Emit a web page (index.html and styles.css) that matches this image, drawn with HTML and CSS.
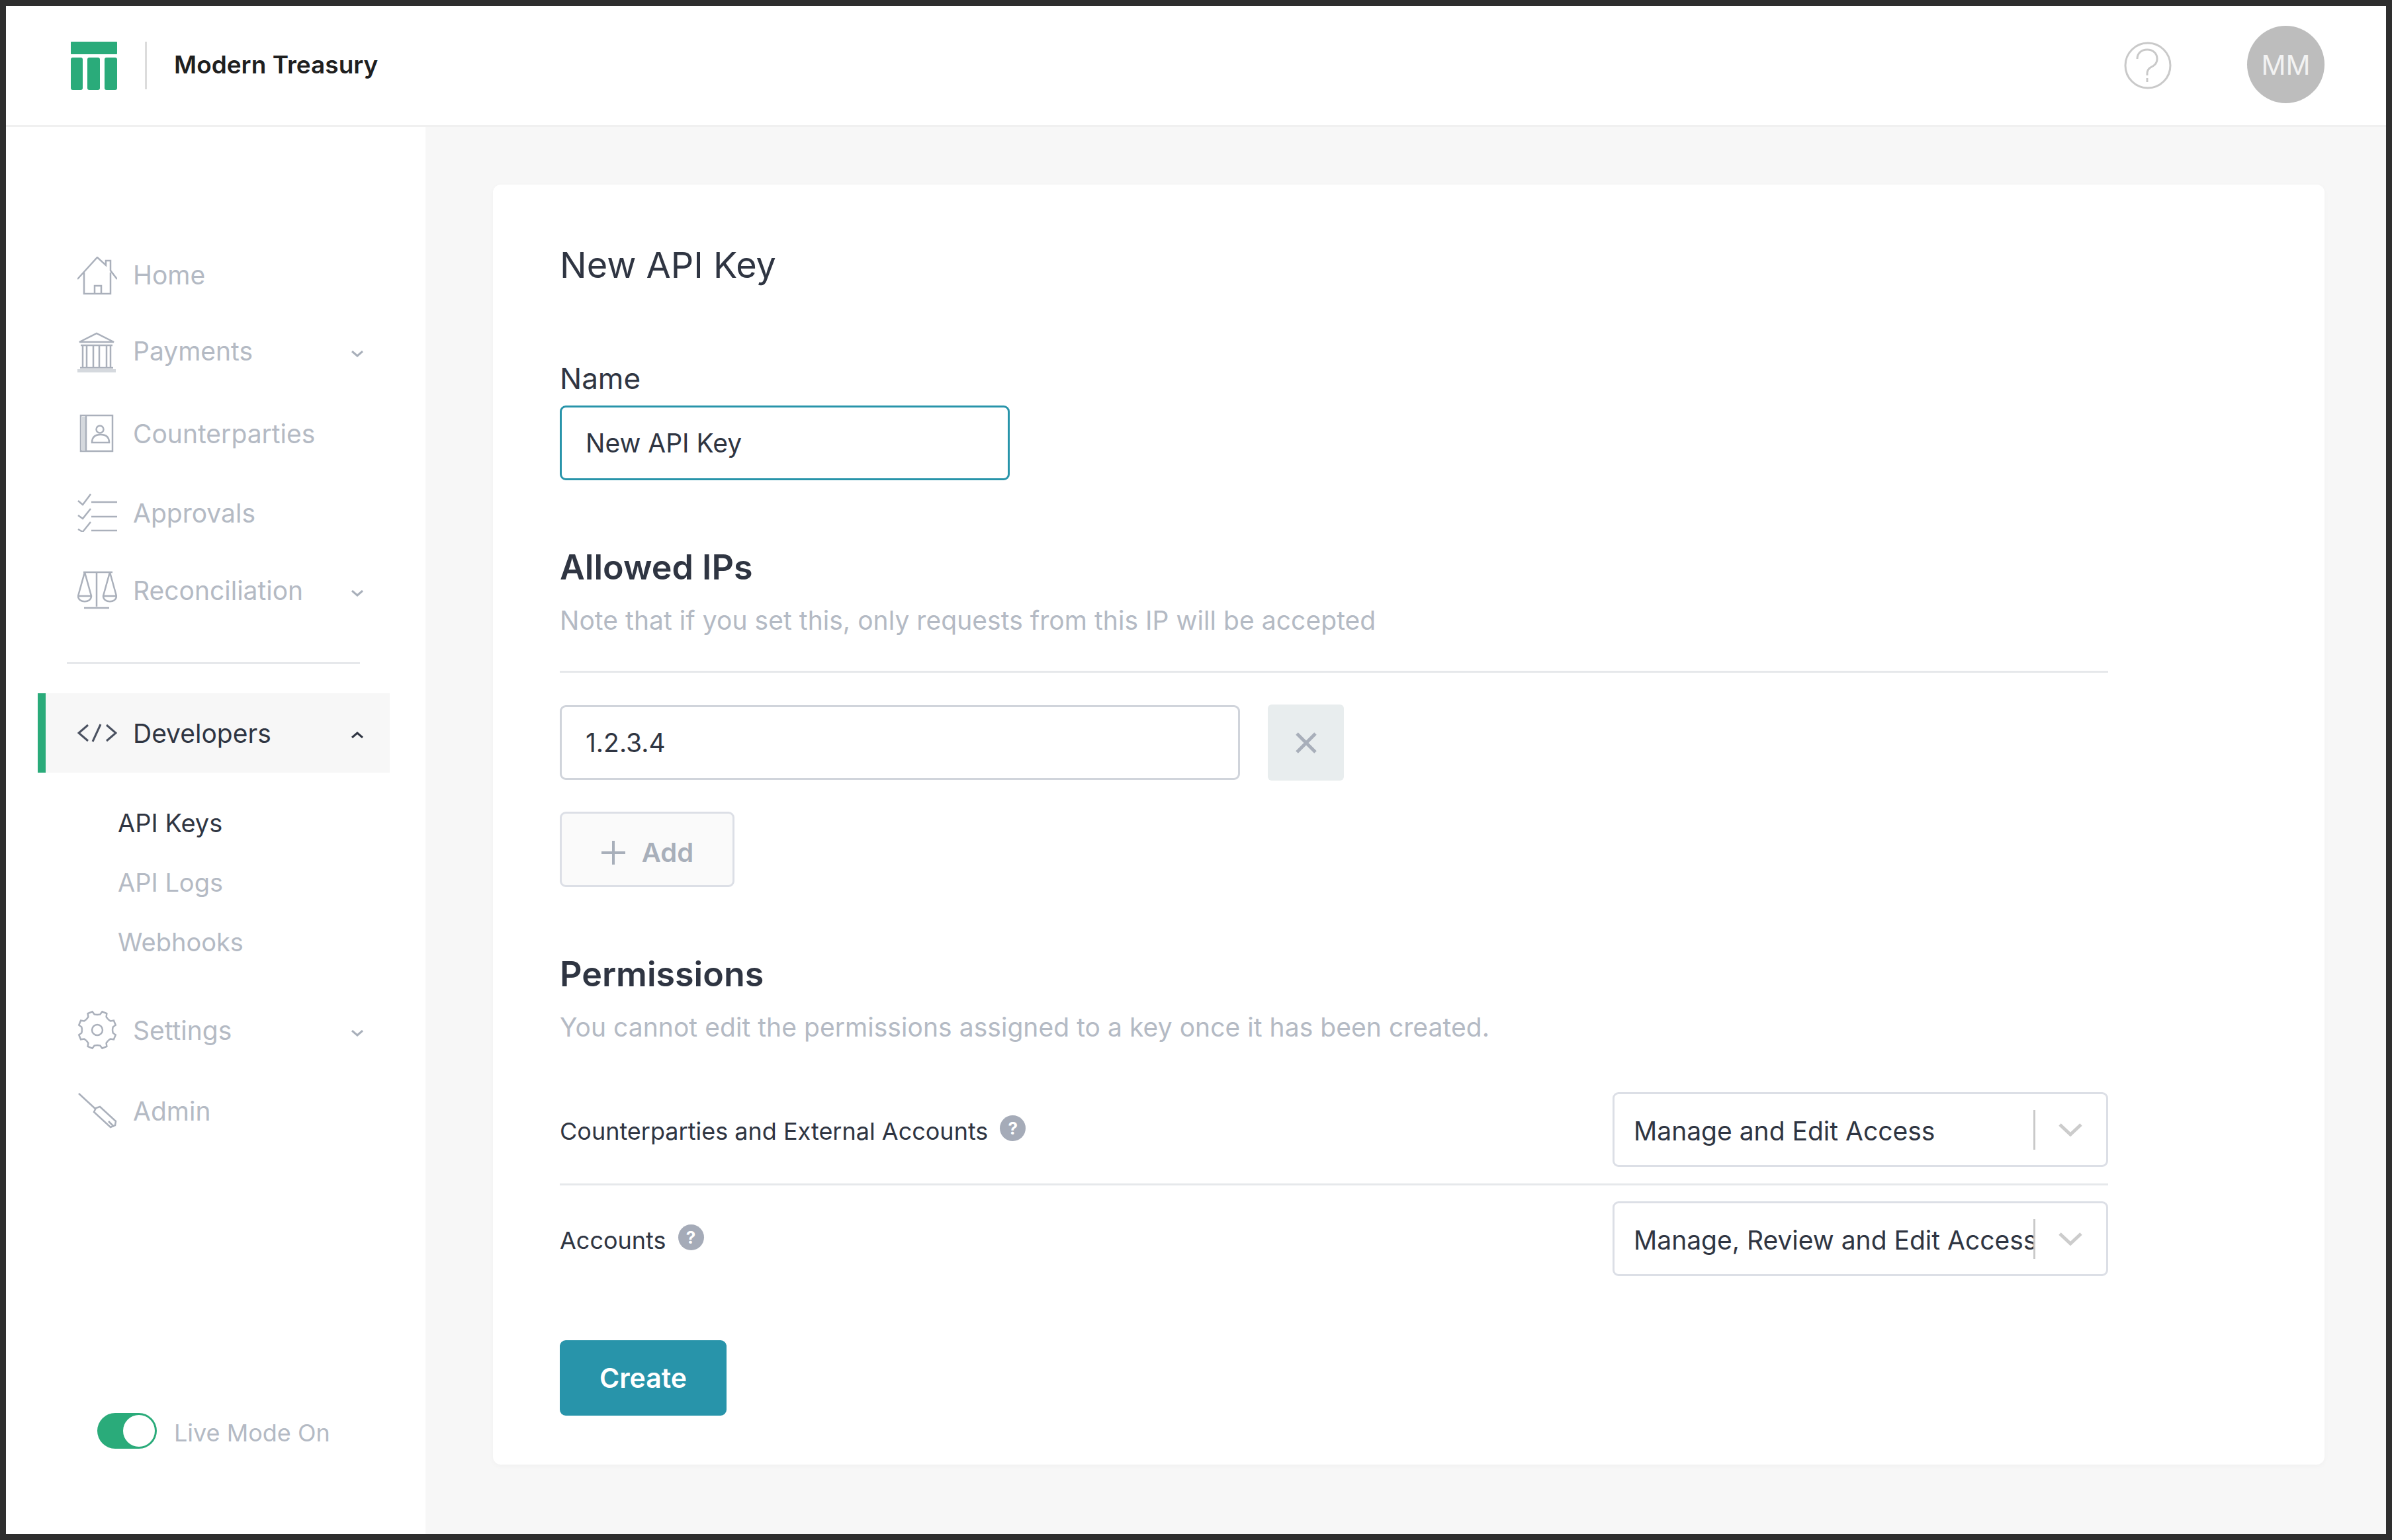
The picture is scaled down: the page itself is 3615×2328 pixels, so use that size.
FILE: index.html
```html
<!DOCTYPE html>
<html lang="en">
<head>
    <meta charset="UTF-8">
    <title>New API Key</title>
    <link rel="stylesheet" href="styles.css">
</head>
<body>
    <div class="frame">
        <header class="topbar">
            <div class="brand">
                <svg class="logo" width="70" height="73" viewBox="0 0 70 73">
                    <rect x="0" y="0" width="70" height="19" rx="1" fill="#2aab7a"/>
                    <rect x="0" y="24" width="18" height="49" rx="3" fill="#2aab7a"/>
                    <rect x="25" y="24" width="19" height="49" rx="3" fill="#2aab7a"/>
                    <rect x="51" y="24" width="19" height="49" rx="3" fill="#2aab7a"/>
                </svg>
                <span class="brand-divider"></span>
                <span class="brand-name">Modern Treasury</span>
            </div>
            <div class="topbar-right">
                <svg class="help" width="72" height="72" viewBox="0 0 72 72" fill="none" stroke="#c9c9c9" stroke-width="3">
                    <circle cx="36" cy="36" r="34"/>
                    <path d="M20 26c0-9 7-14 15-14s15 5 15 14c0 8-6 11-10 13-3 2-5 4-5 9v3"/>
                    <path d="M35 55v6"/>
                </svg>
                <div class="avatar">MM</div>
            </div>
        </header>

        <div class="layout">
            <nav class="sidebar">
                <a class="nav-item nav-home">
                    <svg class="nav-icon" width="60" height="58" viewBox="0 0 60 58">
                        <path d="M0 34 30 1l13 12V6h7v15l10 13M10 24v32h40V24M26 56V44h10v12"/>
                    </svg>
                    <span>Home</span>
                </a>
                <a class="nav-item nav-payments">
                    <svg class="nav-icon" width="60" height="62" viewBox="0 0 60 62">
                        <path d="M3 15 29 2l26 13zM5 20h48M8 20v33M14 20v33M24 20v33M33 20v33M44 20v33M50 20v33M4 54h50"/>
                        <rect class="fill" x="0" y="56" width="58" height="5"/>
                    </svg>
                    <span>Payments</span>
                    <svg class="chevron" width="18" height="10" viewBox="0 0 18 10"><path d="M1 1l8 7 8-7"/></svg>
                </a>
                <a class="nav-item nav-counter">
                    <svg class="nav-icon" width="60" height="58" viewBox="0 0 60 58">
                        <rect x="5" y="2" width="48" height="54"/>
                        <rect class="fill" x="7" y="4" width="5" height="50"/>
                        <path d="M13 2v54M22 43c0-9 6-12 13-12s13 3 13 12z"/>
                        <circle cx="34" cy="23" r="5.500"/>
                    </svg>
                    <span>Counterparties</span>
                </a>
                <a class="nav-item nav-approvals">
                    <svg class="nav-icon" width="60" height="58" viewBox="0 0 60 58">
                        <path d="M1 11l7 6L20 1M1 33l7 5 12-15M1 54l7 4 12-15M21 13h39M21 35h39M21 56h39"/>
                    </svg>
                    <span>Approvals</span>
                </a>
                <a class="nav-item nav-recon">
                    <svg class="nav-icon" width="60" height="58" viewBox="0 0 60 58">
                        <path d="M9 2h44M29 2v52M11 2 1 38c0 11 20 11 20 0L11 2M49 2 39 38c0 11 20 11 20 0L49 2M1 38h20M39 38h20M10 56h38"/>
                    </svg>
                    <span>Reconciliation</span>
                    <svg class="chevron" width="18" height="10" viewBox="0 0 18 10"><path d="M1 1l8 7 8-7"/></svg>
                </a>

                <hr class="nav-divider">

                <a class="nav-item nav-active">
                    <svg class="nav-icon" width="60" height="28" viewBox="0 0 60 28">
                        <path d="M16 2 2 14l14 12M44 2l14 12-14 12M35 1 23 27"/>
                    </svg>
                    <span>Developers</span>
                    <svg class="chevron" width="18" height="10" viewBox="0 0 18 10"><path d="M1 9l8-7 8 7"/></svg>
                </a>
                <ul class="subnav">
                    <li class="current">API Keys</li>
                    <li>API Logs</li>
                    <li>Webhooks</li>
                </ul>
                <a class="nav-item nav-settings">
                    <svg class="nav-icon" width="60" height="60" viewBox="0 0 60 60">
                        <defs>
                            <path id="gear-tooth" d="M-8.800-21.200-5-23.500-3.700-28.500 3.700-28.500 5-23.500 8.800-21.200"/>
                        </defs>
                        <g transform="translate(30 30)">
                            <use href="#gear-tooth" transform="rotate(22.500)"/>
                            <use href="#gear-tooth" transform="rotate(67.500)"/>
                            <use href="#gear-tooth" transform="rotate(112.500)"/>
                            <use href="#gear-tooth" transform="rotate(157.500)"/>
                            <use href="#gear-tooth" transform="rotate(202.500)"/>
                            <use href="#gear-tooth" transform="rotate(247.500)"/>
                            <use href="#gear-tooth" transform="rotate(292.500)"/>
                            <use href="#gear-tooth" transform="rotate(337.500)"/>
                        </g>
                        <circle cx="30" cy="30" r="8"/>
                    </svg>
                    <span>Settings</span>
                    <svg class="chevron" width="18" height="10" viewBox="0 0 18 10"><path d="M1 1l8 7 8-7"/></svg>
                </a>
                <a class="nav-item nav-admin">
                    <svg class="nav-icon" width="60" height="56" viewBox="0 0 60 56">
                        <path d="M2 2l26 24M28 24l-3 6 25 23 7-3 1-6-24-22z"/>
                        <path d="M47 44l8 8"/>
                    </svg>
                    <span>Admin</span>
                </a>

                <div class="live-mode">
                    <span class="toggle"><span class="knob"></span></span>
                    <span class="live-label">Live Mode On</span>
                </div>
            </nav>

            <main class="content">
                <section class="card">
                    <h1>New API Key</h1>

                    <label class="field-label" for="keyName">Name</label>
                    <input class="text-input name-input" id="keyName" type="text" value="New API Key">

                    <h2 class="section-title ips-title">Allowed IPs</h2>
                    <p class="hint">Note that if you set this, only requests from this IP will be accepted</p>
                    <div class="ip-list">
                        <div class="ip-row">
                            <input class="text-input ip-input" type="text" value="1.2.3.4">
                            <button class="remove-btn" type="button">
                                <svg width="32" height="32" viewBox="0 0 32 32"><path d="M2 2l28 28M30 2 2 30"/></svg>
                            </button>
                        </div>
                        <button class="add-btn" type="button">
                            <svg width="38" height="38" viewBox="0 0 38 38"><path d="M19 1v36M1 19h36"/></svg>
                            <span>Add</span>
                        </button>
                    </div>

                    <h2 class="section-title perm-title">Permissions</h2>
                    <p class="hint">You cannot edit the permissions assigned to a key once it has been created.</p>

                    <div class="perm-row first">
                        <div class="perm-name">
                            <span class="perm-label">Counterparties and External Accounts</span>
                            <span class="info">?</span>
                        </div>
                        <div class="select">
                            <span class="select-value">Manage and Edit Access</span>
                            <span class="select-sep"></span>
                            <svg class="select-arrow" width="36" height="20" viewBox="0 0 36 20"><path d="M2 2l16 15L34 2"/></svg>
                        </div>
                    </div>
                    <div class="perm-row">
                        <div class="perm-name">
                            <span class="perm-label">Accounts</span>
                            <span class="info">?</span>
                        </div>
                        <div class="select">
                            <span class="select-value">Manage, Review and Edit Access</span>
                            <span class="select-sep"></span>
                            <svg class="select-arrow" width="36" height="20" viewBox="0 0 36 20"><path d="M2 2l16 15L34 2"/></svg>
                        </div>
                    </div>

                    <button class="create-btn" type="button">Create</button>
                </section>
            </main>
        </div>
    </div>
</body>
</html>
```
FILE: styles.css
```css
html, body {
    height: 100%;
    margin: 0;
}
body {
    font-family: Inter, "Liberation Sans", sans-serif;
    color: #2f3542;
    background-color: #2e2e2e;
    padding: 9px;
    box-sizing: border-box;
    overflow: hidden;
}
.frame {
    height: 100%;
    display: flex;
    flex-direction: column;
    background-color: #fff;
}

/* top bar */
.topbar {
    flex: none;
    height: 183px;
    box-sizing: border-box;
    border-bottom: 3px solid #f0f0f0;
    display: flex;
    align-items: center;
    justify-content: space-between;
    padding: 0 93px 0 98px;
}
.brand {
    display: flex;
    align-items: center;
}
.brand-divider {
    width: 3px;
    height: 72px;
    margin: 0 41px 0 42px;
    background-color: #dcdcdc;
}
.brand-name {
    margin-top: -3px;
    font-size: 37px;
    font-weight: 600;
    color: #1f1f1f;
}
.topbar-right {
    display: flex;
    align-items: center;
    gap: 114px;
}
.help {
    display: block;
}
.avatar {
    width: 117px;
    height: 117px;
    margin-top: -3px;
    border-radius: 50%;
    background-color: #bdbdbd;
    color: #f2f2f2;
    font-size: 41px;
    display: flex;
    align-items: center;
    justify-content: center;
}

.layout {
    flex: 1;
    display: flex;
    min-height: 0;
}

/* sidebar */
.sidebar {
    flex: none;
    width: 634px;
    box-sizing: border-box;
    padding: 193px 54px 129px 48px;
    display: flex;
    flex-direction: column;
}
.nav-item {
    height: 60px;
    display: flex;
    align-items: center;
    font-size: 39px;
    color: #b4bac4;
}
.nav-icon {
    flex: none;
    margin: 0 24px 0 60px;
    fill: none;
    stroke: #aab0bb;
    stroke-width: 2.500;
}
.nav-icon .fill {
    fill: #d5d9de;
    stroke: none;
}
.chevron {
    margin: 10px 40px 0 auto;
    fill: none;
    stroke: #a8afba;
    stroke-width: 3;
}
.nav-home .nav-icon { margin-top: 4px; }
.nav-payments { margin-top: 55px; }
.nav-payments .nav-icon { margin-top: 6px; }
.nav-counter { margin-top: 65px; }
.nav-approvals { margin-top: 60px; }
.nav-recon { margin-top: 57px; }

.nav-divider {
    width: 443px;
    height: 3px;
    margin: 79px 0 44px 44px;
    border: 0;
    background-color: #e6e8eb;
}
.nav-active {
    height: 120px;
    background-color: #f7f7f7;
    border-left: 12px solid #2aab7a;
    color: #2f3542;
}
.nav-active .nav-icon {
    stroke: #4a5160;
    stroke-width: 3;
    margin-left: 48px;
}
.nav-active .chevron {
    margin-top: 6px;
    stroke: #2f3542;
}
.subnav {
    list-style: none;
    margin: 46px 0 0;
    padding: 0 0 0 121px;
    font-size: 38px;
    color: #b4bac4;
}
.subnav li {
    height: 60px;
    line-height: 60px;
    margin-bottom: 30px;
}
.subnav .current {
    color: #2f3542;
}
.nav-settings { margin-top: 43px; }
.nav-admin { margin-top: 62px; }

.live-mode {
    margin-top: auto;
    display: flex;
    align-items: center;
    padding-left: 90px;
}
.toggle {
    width: 90px;
    height: 54px;
    box-sizing: border-box;
    border-radius: 27px;
    background-color: #2aab7a;
    display: flex;
    justify-content: flex-end;
    padding: 3px;
}
.knob {
    width: 48px;
    height: 48px;
    border-radius: 50%;
    background-color: #fff;
}
.live-label {
    margin: 5px 0 0 26px;
    font-size: 36px;
    color: #b4bac4;
}

/* main column */
.content {
    flex: 1;
    min-width: 0;
    background-color: #f7f7f7;
    padding: 87px 93px 0 102px;
}
.card {
    background-color: #fff;
    border-radius: 12px;
    box-shadow: 0 2px 8px rgba(0, 0, 0, 0.03);
    padding: 87px 327px 74px 101px;
}
h1 {
    margin: 0;
    font-size: 54px;
    line-height: 70px;
    font-weight: 400;
    color: #2f3542;
}
.field-label {
    display: block;
    margin-top: 111px;
    margin-bottom: 16px;
    font-size: 44px;
    line-height: 50px;
}
.text-input {
    display: block;
    box-sizing: border-box;
    height: 113px;
    padding: 0 36px;
    border: 3px solid #d0d4db;
    border-radius: 9px;
    font-family: inherit;
    font-size: 39px;
    color: #2f3542;
    background-color: #fff;
    outline: none;
}
.name-input {
    width: 680px;
    border-color: #2894aa;
}
.section-title {
    margin: 0;
    font-size: 52px;
    line-height: 60px;
    font-weight: 600;
    color: #2f3542;
}
.ips-title { margin-top: 102px; }
.perm-title { margin-top: 102px; }
.hint {
    margin: 25px 0 0;
    font-size: 39px;
    line-height: 50px;
    letter-spacing: 0.05px;
    color: #b4bac4;
}
.ip-list {
    margin-top: 51px;
    padding-top: 48px;
    border-top: 3px solid #e6e8eb;
}
.ip-row {
    display: flex;
    align-items: center;
    gap: 42px;
}
.ip-input {
    width: 1028px;
}
.remove-btn {
    width: 115px;
    height: 115px;
    padding: 0;
    border: 0;
    border-radius: 6px;
    background-color: #e8edee;
    display: flex;
    align-items: center;
    justify-content: center;
}
.remove-btn svg {
    fill: none;
    stroke: #a8afba;
    stroke-width: 5;
}
.add-btn {
    margin-top: 47px;
    width: 264px;
    height: 114px;
    padding: 9px 0 0;
    border: 3px solid #dcdfe6;
    border-radius: 9px;
    background-color: #fafafa;
    display: flex;
    align-items: center;
    justify-content: center;
    gap: 24px;
    font-family: inherit;
    font-size: 40px;
    font-weight: 600;
    color: #a8afba;
}
.add-btn svg {
    fill: none;
    stroke: #a8afba;
    stroke-width: 4;
}
.perm-row {
    display: flex;
    align-items: center;
    justify-content: space-between;
    padding-top: 24px;
}
.perm-row.first {
    margin-top: 49px;
    padding-bottom: 25px;
    border-bottom: 3px solid #e6e8eb;
}
.perm-name {
    display: flex;
    align-items: center;
    gap: 18px;
    font-size: 36px;
}
.perm-label {
    padding-top: 4px;
}
.info {
    width: 39px;
    height: 39px;
    margin-top: -4px;
    border-radius: 50%;
    background-color: #a5abb8;
    color: #fff;
    font-size: 26px;
    font-weight: 700;
    display: flex;
    align-items: center;
    justify-content: center;
}
.select {
    box-sizing: border-box;
    width: 749px;
    height: 113px;
    border: 3px solid #dcdfe6;
    border-radius: 9px;
    display: flex;
    align-items: center;
    padding-left: 29px;
    font-size: 39px;
    color: #2f3542;
}
.select-value {
    width: 604px;
    flex: none;
    padding-top: 3px;
    white-space: nowrap;
    overflow: hidden;
}
.select-sep {
    flex: none;
    width: 3px;
    height: 60px;
    background-color: #c9c9c9;
}
.select-arrow {
    flex: none;
    margin-left: 35px;
    fill: none;
    stroke: #cccccc;
    stroke-width: 5;
}
.create-btn {
    display: block;
    margin-top: 97px;
    width: 252px;
    height: 114px;
    border: 0;
    border-radius: 9px;
    background-color: #2894aa;
    color: #fff;
    font-family: inherit;
    font-size: 41px;
    font-weight: 600;
}
```
